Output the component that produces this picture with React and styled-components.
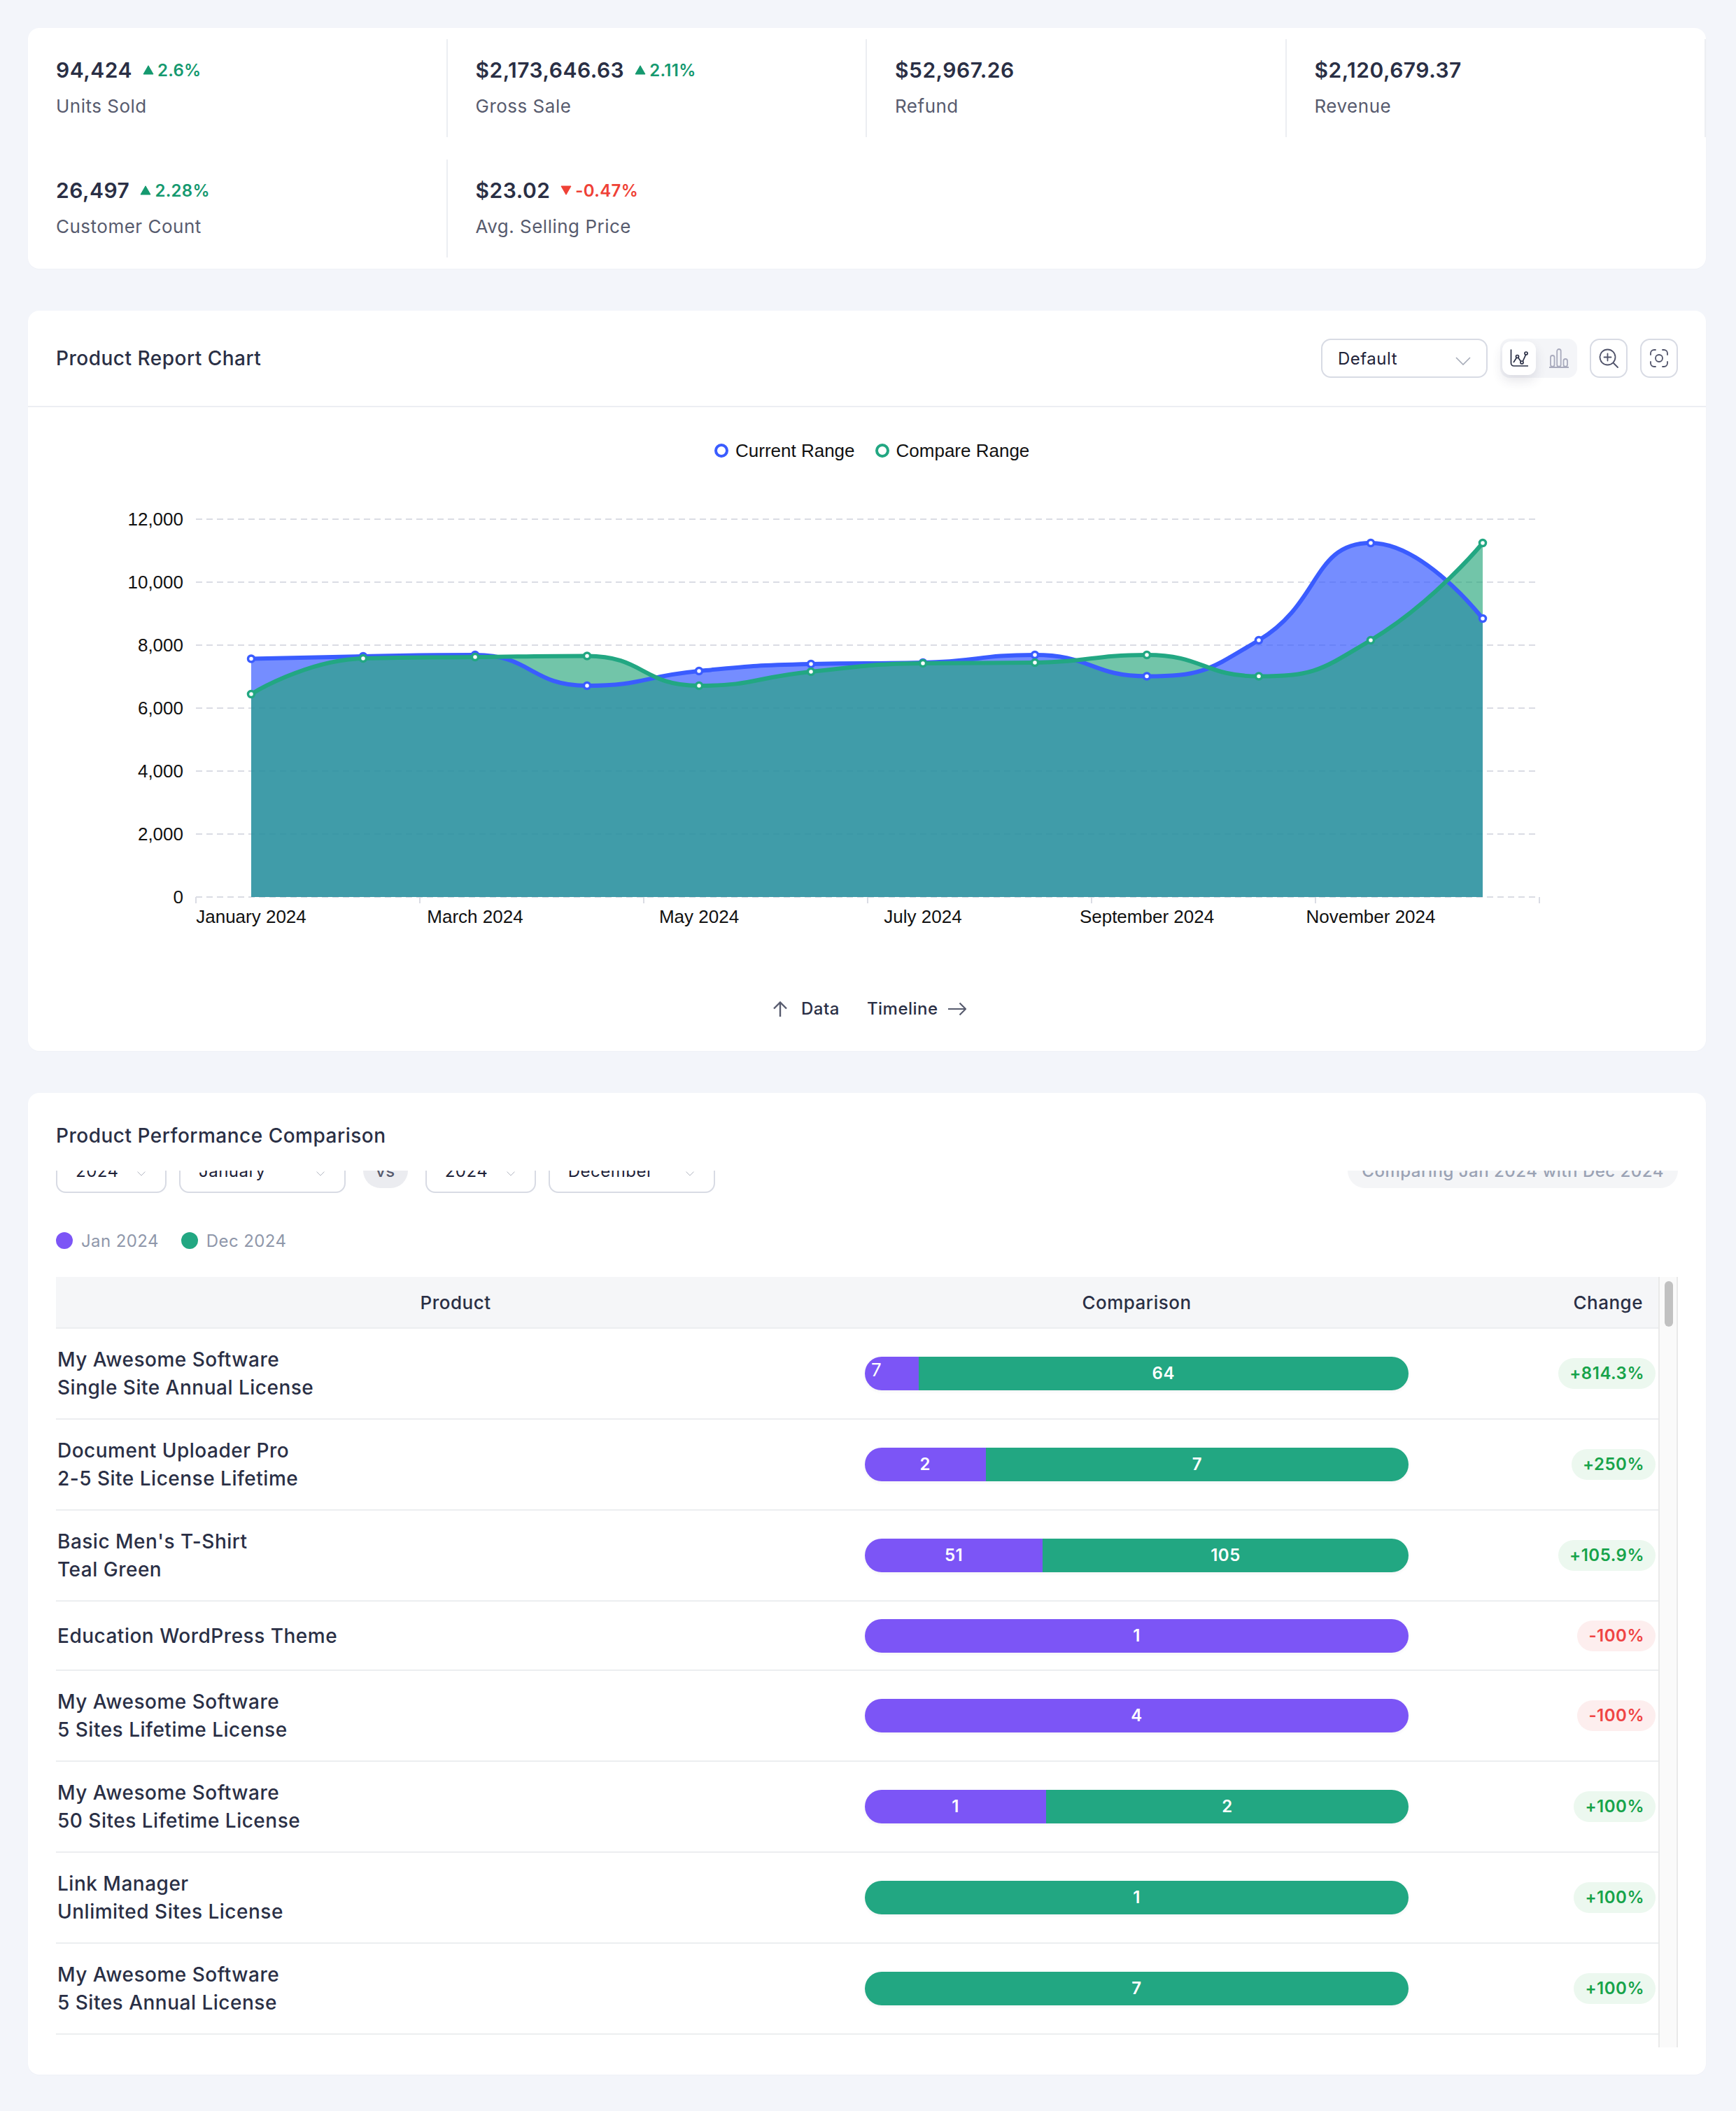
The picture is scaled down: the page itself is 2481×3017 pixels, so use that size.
import React from "react";
import styled, { createGlobalStyle } from "styled-components";

const GlobalStyle = createGlobalStyle`
  html, body {
    margin: 0;
    padding: 0;
    background: #f3f5fa;
  }
  * { box-sizing: border-box; }
`;

const Page = styled.div`
  width: 2481px;
  height: 3017px;
  padding: 40px 43px 0 40px;
  font-family: Inter, "Liberation Sans", sans-serif;
  letter-spacing: 0.5px;
  color: #2a2f45;
  display: flex;
  flex-direction: column;
  gap: 60px;
`;

const Card = styled.section`
  background: #fff;
  border-radius: 16px;
  box-shadow: 0 1px 2px rgba(40, 50, 80, 0.02);
`;

/* stats */
const StatsGrid = styled(Card)`
  display: grid;
  grid-template-columns: repeat(4, 1fr);
  row-gap: 32px;
  padding: 16px 0;
`;

const Stat = styled.div`
  height: 140px;
  padding: 24px 0 0 40px;
  border-right: 2px solid #eceef2;
  &:last-child {
    border-right: 0;
  }
`;

const StatTop = styled.div`
  display: flex;
  align-items: center;
  gap: 15px;
  height: 40px;
`;

const StatValue = styled.div`
  font-size: 30px;
  font-weight: 600;
  color: #2a2f45;
`;

const Trend = styled.div`
  display: flex;
  align-items: center;
  gap: 5px;
  font-size: 24px;
  font-weight: 600;
  letter-spacing: 0.3px;
  color: ${(p) => (p.$down ? "#ef4136" : "#15996f")};
`;

const StatLabel = styled.div`
  margin-top: 14px;
  font-size: 26px;
  line-height: 36px;
  color: #575b6e;
`;

/* chart card */
const ChartHeader = styled.header`
  height: 138px;
  padding: 40px 40px 0;
  display: flex;
  justify-content: space-between;
  border-bottom: 2px solid #eceef3;
`;

const CardTitle = styled.h2`
  margin: 0;
  font-size: 28px;
  font-weight: 500;
  line-height: 56px;
  color: #2a2f45;
`;

const Tools = styled.div`
  display: flex;
  align-items: flex-start;
`;

const Select = styled.div`
  width: ${(p) => p.$w}px;
  height: ${(p) => p.$h || 56}px;
  padding: 0 ${(p) => p.$pad || 22}px 0 ${(p) => p.$pl || 22}px;
  display: flex;
  flex: none;
  align-items: center;
  justify-content: space-between;
  border: 2px solid #d8dbe4;
  border-radius: 14px;
  font-size: 24px;
  color: #1e2238;
  background: #fff;
`;

const ToggleGroup = styled.div`
  width: 110px;
  height: 56px;
  margin: 0 18px;
  padding: 4px 2px 4px 3px;
  display: flex;
  gap: 9px;
  background: #f4f5f8;
  border-radius: 14px;
`;

const ToggleButton = styled.div`
  width: 48px;
  height: 48px;
  flex: none;
  display: flex;
  align-items: center;
  justify-content: center;
  border-radius: 12px;
  background: ${(p) => (p.$active ? "#fff" : "transparent")};
  box-shadow: ${(p) => (p.$active ? "0 8px 16px rgba(40, 45, 70, 0.12)" : "none")};
`;

const IconButton = styled.div`
  width: 54px;
  height: 56px;
  margin-right: ${(p) => p.$mr || 0}px;
  display: flex;
  align-items: center;
  justify-content: center;
  border: 2px solid #d8dbe4;
  border-radius: 14px;
`;

const ChartLegend = styled.div`
  height: 50px;
  margin-top: 37px;
  padding-left: 981px;
  display: flex;
  align-items: center;
  font-family: "Liberation Sans", Arial, sans-serif;
  font-size: 26px;
  letter-spacing: 0;
  color: #111;
`;

const LegendEntry = styled.div`
  display: flex;
  align-items: center;
  gap: 10px;
  margin-right: 29px;
`;

const Ring = styled.span`
  width: 20px;
  height: 20px;
  border-radius: 50%;
  border: 4px solid ${(p) => p.$color};
  background: #fff;
`;

const ChartSvg = styled.svg`
  display: block;
  margin-top: 31px;
  letter-spacing: 0;
`;

const ChartFooter = styled.div`
  height: 162px;
  padding-top: 85px;
  padding-left: 1064px;
  display: flex;
  align-items: flex-start;
  font-size: 24px;
  font-weight: 500;
  line-height: 34px;
`;

const FooterItem = styled.div`
  display: flex;
  align-items: center;
  gap: ${(p) => p.$gap}px;
  margin-right: 39px;
`;

/* comparison card */
const ComparisonCard = styled(Card)`
  padding: 0 40px;
  height: 1403px;
`;

const TitleBar = styled.div`
  height: 111px;
  padding-top: 33px;
`;

const FilterClip = styled.div`
  height: 32px;
  overflow: hidden;
  display: flex;
  align-items: flex-end;
  justify-content: space-between;
`;

const FilterGroup = styled.div`
  display: flex;
  align-items: flex-end;
  gap: 18px;
`;

const Chevron = styled.svg`
  margin-top: 8px;
  flex: none;
`;

const Pill = styled.div`
  height: 50px;
  margin: 0 ${(p) => p.$mx || 0}px 7px;
  padding: 0 ${(p) => p.$px}px;
  display: flex;
  flex: none;
  align-items: center;
  border-radius: 25px;
  font-size: 24px;
  font-weight: 500;
  background: ${(p) => p.$bg};
  color: ${(p) => p.$color};
`;

const SeriesLegend = styled.div`
  height: 40px;
  margin: 48px 0 32px;
  display: flex;
  align-items: center;
  gap: 32px;
  font-size: 24px;
  letter-spacing: 0.4px;
  color: #8f97aa;
`;

const SeriesEntry = styled.div`
  display: flex;
  align-items: center;
  gap: 12px;
`;

const Dot = styled.span`
  width: 24px;
  height: 24px;
  border-radius: 50%;
  background: ${(p) => p.$color};
`;

const TableViewport = styled.div`
  position: relative;
  height: 1101px;
  padding-right: 28px;
  overflow: hidden;
`;

const Row = styled.div`
  display: grid;
  grid-template-columns: 1142px 805px 343px;
  align-items: center;
  min-height: 99px;
  padding: 24px 0;
  border-bottom: 2px solid #eceef0;
`;

const HeadRow = styled(Row)`
  min-height: 0;
  height: 74px;
  padding: 0;
  background: #f5f6f8;
  font-size: 26px;
  font-weight: 500;
  color: #2a2f45;
`;

const HeadCell = styled.div`
  text-align: ${(p) => p.$align || "center"};
  padding-right: ${(p) => p.$pr || 0}px;
`;

const ProductName = styled.div`
  padding-left: 2px;
  font-size: 28px;
  font-weight: 500;
  line-height: 40px;
  color: #2a2f45;
`;

const Bar = styled.div`
  width: 777px;
  height: 48px;
  margin-left: 14px;
  display: flex;
  overflow: hidden;
  border-radius: 24px;
  box-shadow: 0 2px 4px rgba(30, 40, 60, 0.05);
`;

const Segment = styled.div`
  display: flex;
  align-items: ${(p) => (p.$tight ? "flex-start" : "center")};
  justify-content: ${(p) => (p.$tight ? "flex-start" : "center")};
  padding: ${(p) => (p.$tight ? "4px 0 0 9px" : "0")};
  font-size: ${(p) => (p.$tight ? 26 : 24)}px;
  font-weight: ${(p) => (p.$tight ? 400 : 600)};
  line-height: ${(p) => (p.$tight ? "30px" : "48px")};
  color: #fff;
  background: ${(p) => (p.$kind === "jan" ? "#7c55f6" : "#22a782")};
`;

const ChangeCell = styled.div`
  display: flex;
  justify-content: flex-end;
  padding-right: 4px;
`;

const ChangeBadge = styled.div`
  height: 44px;
  padding: 0 16px;
  border-radius: 22px;
  font-size: 24px;
  font-weight: 600;
  line-height: 44px;
  color: ${(p) => (p.$down ? "#ef4444" : "#16a34a")};
  background: ${(p) => (p.$down ? "#fdeeee" : "#ecf8ef")};
`;

const ScrollTrack = styled.div`
  position: absolute;
  top: 0;
  right: 0;
  bottom: 0;
  width: 28px;
  padding: 6px 5px 0 7px;
  background: #fafafa;
  border-left: 2px solid #e9e9e9;
  border-right: 2px solid #e9e9e9;
`;

const ScrollThumb = styled.div`
  height: 65px;
  border-radius: 8px;
  background: #c1c1c1;
`;

const months = ["January 2024", "March 2024", "May 2024", "July 2024", "September 2024", "November 2024"];
const current = [7567, 7644, 7689, 6711, 7178, 7400, 7444, 7689, 7011, 8156, 11244, 8844];
const compare = [6444, 7578, 7622, 7656, 6711, 7156, 7422, 7444, 7689, 7011, 8156, 11244];

const xOf = (i) => 359 + i * 160;
const yOf = (v) => 1282 - v * 0.045;
const clamp = (v, a, b) => Math.min(Math.max(a, b), Math.max(Math.min(a, b), v));

// same smoothing as the chart lib: control points scaled by neighbour distance
function smoothPath(values, smooth = 0.5) {
  const pts = values.map((v, i) => [xOf(i), yOf(v)]);
  let d = `M${pts[0][0]} ${pts[0][1]}`;
  let cp = pts[0];
  for (let i = 0; i < pts.length - 1; i++) {
    const [x, y] = pts[i + 1];
    const next = pts[i + 2];
    if (!next) {
      d += `C${cp[0]} ${cp[1]} ${x} ${y} ${x} ${y}`;
      break;
    }
    const [px, py] = pts[i];
    const lenPrev = Math.hypot(x - px, y - py);
    const lenNext = Math.hypot(next[0] - x, next[1] - y);
    const ratio = lenNext / (lenNext + lenPrev);
    const nx = clamp(x + (next[0] - px) * smooth * ratio, x, next[0]);
    const ny = clamp(y + (next[1] - py) * smooth * ratio, y, next[1]);
    const cx0 = clamp(x - ((nx - x) * lenPrev) / lenNext, px, x);
    const cy0 = clamp(y - ((ny - y) * lenPrev) / lenNext, py, y);
    d += `C${cp[0]} ${cp[1]} ${cx0} ${cy0} ${x} ${y}`;
    cp = [
      clamp(x + ((x - cx0) * lenNext) / lenPrev, x, next[0]),
      clamp(y + ((y - cy0) * lenNext) / lenPrev, y, next[1]),
    ];
  }
  return d;
}

const SeriesArea = ({ values, fill, opacity }) => (
  <path d={`${smoothPath(values)}L${xOf(11)} 1282L${xOf(0)} 1282Z`} fill={fill} fillOpacity={opacity} />
);

const SeriesLine = ({ values, color }) => (
  <g>
    <path d={smoothPath(values)} fill="none" stroke={color} strokeWidth="6" />
    {values.map((v, i) => (
      <circle key={i} cx={xOf(i)} cy={yOf(v)} r="4.5" fill="#fff" stroke={color} strokeWidth="3.5" />
    ))}
  </g>
);

function Chart() {
  const ticks = [0, 2000, 4000, 6000, 8000, 10000, 12000];
  return (
    <ChartSvg width="2398" height="640" viewBox="40 700 2398 640">
      {ticks.map((t) => (
        <g key={t}>
          <line x1="280" x2={t === 0 ? 2200 : 2196} y1={yOf(t)} y2={yOf(t)} stroke="#dadce4" strokeWidth="2" strokeDasharray="9 6" />
          <text x="262" y={yOf(t) + 9} textAnchor="end" fontFamily="'Liberation Sans', Arial, sans-serif" fontSize="26" fill="#111">
            {t.toLocaleString("en-US")}
          </text>
        </g>
      ))}
      {[0, 1, 2, 3, 4, 5, 6].map((i) => (
        <line key={i} x1={280 + i * 320} x2={280 + i * 320} y1="1282" y2="1291" stroke="#dadce4" strokeWidth="2" />
      ))}
      {months.map((m, i) => (
        <text key={m} x={359 + i * 320} y="1319" textAnchor="middle" fontFamily="'Liberation Sans', Arial, sans-serif" fontSize="26" fill="#111">
          {m}
        </text>
      ))}
      <SeriesArea values={current} fill="#3a5cff" opacity={0.7} />
      <SeriesArea values={compare} fill="#22a578" opacity={0.64} />
      <SeriesLine values={current} color="#3a5cff" />
      <SeriesLine values={compare} color="#22a782" />
    </ChartSvg>
  );
}

const LineChartIcon = () => (
  <svg width="26" height="26" viewBox="0 0 26 26" fill="none" stroke="#2a2f45" strokeWidth="1.7">
    <path d="M1.5 1v19a4 4 0 0 0 4 4H26" strokeLinecap="round" />
    <path d="M5 19l4.5-7M12 12.5l3.5 5M18.5 17l4-9" />
    <circle cx="10.5" cy="10.5" r="2" />
    <circle cx="17" cy="19" r="2" />
    <circle cx="23" cy="6" r="2" />
  </svg>
);

const BarChartIcon = () => (
  <svg width="28" height="28" viewBox="0 0 28 28" fill="none" stroke="#a9abbd" strokeWidth="1.8">
    <rect x="2" y="10" width="5.5" height="16" rx="2.7" />
    <rect x="11.2" y="1" width="5.5" height="25" rx="2.7" />
    <rect x="20.5" y="15" width="5.5" height="11" rx="2.7" />
    <path d="M0.5 27h27" strokeLinecap="round" />
  </svg>
);

const ZoomIcon = () => (
  <svg width="28" height="28" viewBox="0 0 28 28" fill="none" stroke="#50536a" strokeWidth="1.8" strokeLinecap="round">
    <circle cx="12.5" cy="12.5" r="11" />
    <path d="M12.5 7.5v10M7.5 12.5h10M21 21l6 6" />
  </svg>
);

const FocusIcon = () => (
  <svg width="28" height="28" viewBox="0 0 28 28" fill="none" stroke="#50536a" strokeWidth="1.8" strokeLinecap="round">
    <path d="M2 9V7a5 5 0 0 1 5-5h2M19 2h2a5 5 0 0 1 5 5v2M26 19v2a5 5 0 0 1-5 5h-2M9 26H7a5 5 0 0 1-5-5v-2" />
    <circle cx="14" cy="14" r="5" />
  </svg>
);

const ChevronIcon = ({ size = 22, color = "#a6abb8" }) => (
  <Chevron width={size} height={size * 0.55} viewBox="0 0 22 12" fill="none" stroke={color} strokeWidth="1.6">
    <path d="M1 1l10 10L21 1" />
  </Chevron>
);

const TrendMark = ({ down }) => (
  <svg width="16" height="14" viewBox="0 0 16 14" fill={down ? "#ef4136" : "#15996f"} stroke={down ? "#ef4136" : "#15996f"} strokeWidth="1" strokeLinejoin="round">
    <path d={down ? "M1 1h14L8 13.2z" : "M8 .8L15 13H1z"} />
  </svg>
);

const stats = [
  { value: "94,424", trend: "2.6%", label: "Units Sold" },
  { value: "$2,173,646.63", trend: "2.11%", label: "Gross Sale" },
  { value: "$52,967.26", label: "Refund" },
  { value: "$2,120,679.37", label: "Revenue" },
  { value: "26,497", trend: "2.28%", label: "Customer Count" },
  { value: "$23.02", trend: "-0.47%", down: true, label: "Avg. Selling Price" },
];

const rows = [
  { name: ["My Awesome Software", "Single Site Annual License"], jan: 7, dec: 64, change: "+814.3%" },
  { name: ["Document Uploader Pro", "2-5 Site License Lifetime"], jan: 2, dec: 7, change: "+250%" },
  { name: ["Basic Men's T-Shirt", "Teal Green"], jan: 51, dec: 105, change: "+105.9%" },
  { name: ["Education WordPress Theme"], jan: 1, dec: 0, change: "-100%", down: true },
  { name: ["My Awesome Software", "5 Sites Lifetime License"], jan: 4, dec: 0, change: "-100%", down: true },
  { name: ["My Awesome Software", "50 Sites Lifetime License"], jan: 1, dec: 2, change: "+100%" },
  { name: ["Link Manager", "Unlimited Sites License"], jan: 0, dec: 1, change: "+100%" },
  { name: ["My Awesome Software", "5 Sites Annual License"], jan: 0, dec: 7, change: "+100%" },
];

function ComparisonBar({ jan, dec }) {
  const total = jan + dec;
  const janShare = jan / total;
  return (
    <Bar>
      {jan > 0 && (
        <Segment $kind="jan" $tight={janShare < 0.15} style={{ width: `${janShare * 100}%` }}>
          {jan}
        </Segment>
      )}
      {dec > 0 && (
        <Segment $kind="dec" style={{ width: `${(dec / total) * 100}%` }}>
          {dec}
        </Segment>
      )}
    </Bar>
  );
}

export default function App() {
  return (
    <Page>
      <GlobalStyle />
      <StatsGrid as="section">
        {stats.map((s) => (
          <Stat key={s.label}>
            <StatTop>
              <StatValue>{s.value}</StatValue>
              {s.trend && (
                <Trend $down={s.down}>
                  <TrendMark down={s.down} />
                  {s.trend}
                </Trend>
              )}
            </StatTop>
            <StatLabel>{s.label}</StatLabel>
          </Stat>
        ))}
      </StatsGrid>

      <Card>
        <ChartHeader>
          <CardTitle>Product Report Chart</CardTitle>
          <Tools>
            <Select $w={238}>
              Default
              <ChevronIcon />
            </Select>
            <ToggleGroup>
              <ToggleButton $active>
                <LineChartIcon />
              </ToggleButton>
              <ToggleButton>
                <BarChartIcon />
              </ToggleButton>
            </ToggleGroup>
            <IconButton $mr={18}>
              <ZoomIcon />
            </IconButton>
            <IconButton>
              <FocusIcon />
            </IconButton>
          </Tools>
        </ChartHeader>
        <ChartLegend>
          <LegendEntry>
            <Ring $color="#3a5cff" />
            Current Range
          </LegendEntry>
          <LegendEntry>
            <Ring $color="#22a782" />
            Compare Range
          </LegendEntry>
        </ChartLegend>
        <Chart />
        <ChartFooter>
          <FooterItem $gap={19}>
            <svg width="22" height="22" viewBox="0 0 22 22" fill="none" stroke="#575b6e" strokeWidth="2.4">
              <path d="M11 22V2M2 10.5L11 1.5l9 9" />
            </svg>
            Data
          </FooterItem>
          <FooterItem $gap={14}>
            Timeline
            <svg width="26" height="20" viewBox="0 0 26 20" fill="none" stroke="#575b6e" strokeWidth="2.2">
              <path d="M0 10h25M16.5 1.5L25 10l-8.5 8.5" />
            </svg>
          </FooterItem>
        </ChartFooter>
      </Card>

      <ComparisonCard>
        <TitleBar>
          <CardTitle>Product Performance Comparison</CardTitle>
        </TitleBar>
        <FilterClip>
          <FilterGroup>
            <Select $w={158} $h={64} $pl={26} $pad={28}>
              2024
              <ChevronIcon size={12} />
            </Select>
            <Select $w={238} $h={64} $pl={26} $pad={28}>
              January
              <ChevronIcon size={12} />
            </Select>
            <Pill $mx={7} $px={18} $bg="#ebecf0" $color="#575b6e">vs</Pill>
            <Select $w={158} $h={64} $pl={26} $pad={28}>
              2024
              <ChevronIcon size={12} />
            </Select>
            <Select $w={238} $h={64} $pl={26} $pad={28}>
              December
              <ChevronIcon size={12} />
            </Select>
          </FilterGroup>
          <Pill $px={20} $bg="#f4f5f7" $color="#9aa2b4">Comparing Jan 2024 with Dec 2024</Pill>
        </FilterClip>
        <SeriesLegend>
          <SeriesEntry>
            <Dot $color="#7c55f6" />
            Jan 2024
          </SeriesEntry>
          <SeriesEntry>
            <Dot $color="#22a782" />
            Dec 2024
          </SeriesEntry>
        </SeriesLegend>
        <TableViewport>
          <HeadRow>
            <HeadCell>Product</HeadCell>
            <HeadCell>Comparison</HeadCell>
            <HeadCell $align="right" $pr={22}>Change</HeadCell>
          </HeadRow>
          {rows.map((r) => (
            <Row key={r.name.join() + r.change}>
              <ProductName>
                {r.name.map((n) => (
                  <div key={n}>{n}</div>
                ))}
              </ProductName>
              <ComparisonBar jan={r.jan} dec={r.dec} />
              <ChangeCell>
                <ChangeBadge $down={r.down}>{r.change}</ChangeBadge>
              </ChangeCell>
            </Row>
          ))}
          <ScrollTrack>
            <ScrollThumb />
          </ScrollTrack>
        </TableViewport>
      </ComparisonCard>
    </Page>
  );
}
